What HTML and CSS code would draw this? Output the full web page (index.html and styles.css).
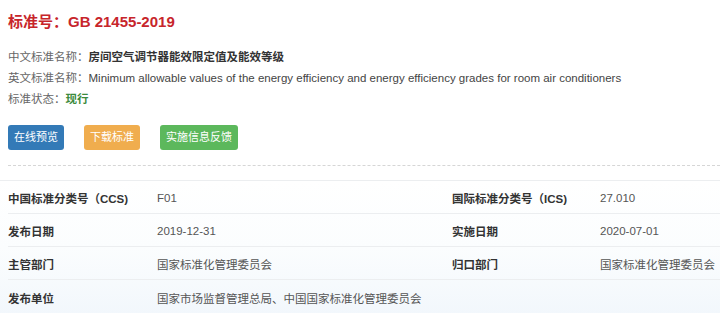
FILE: index.html
```html
<!DOCTYPE html>
<html>
<head>
<meta charset="utf-8">
<link rel="stylesheet" href="styles.css">
</head>
<body>
<div class="page">
  <h1 class="title">标准号：GB 21455-2019</h1>
  <div class="meta">
    <div class="meta-row"><span class="meta-label">中文标准名称：</span><span class="meta-value strong">房间空气调节器能效限定值及能效等级</span></div>
    <div class="meta-row"><span class="meta-label">英文标准名称：</span><span class="meta-value">Minimum allowable values of the energy efficiency and energy efficiency grades for room air conditioners</span></div>
    <div class="meta-row"><span class="meta-label">标准状态：</span><span class="meta-value status">现行</span></div>
  </div>
  <div class="actions">
    <span class="btn btn-blue">在线预览</span>
    <span class="btn btn-orange">下载标准</span>
    <span class="btn btn-green">实施信息反馈</span>
  </div>
  <div class="dotted"></div>
  <div class="table">
    <div class="row">
      <div class="cell label">中国标准分类号（CCS)</div>
      <div class="cell value">F01</div>
      <div class="cell label">国际标准分类号（ICS)</div>
      <div class="cell value">27.010</div>
    </div>
    <div class="row">
      <div class="cell label">发布日期</div>
      <div class="cell value">2019-12-31</div>
      <div class="cell label">实施日期</div>
      <div class="cell value">2020-07-01</div>
    </div>
    <div class="row">
      <div class="cell label">主管部门</div>
      <div class="cell value">国家标准化管理委员会</div>
      <div class="cell label">归口部门</div>
      <div class="cell value">国家标准化管理委员会</div>
    </div>
    <div class="row last">
      <div class="cell label">发布单位</div>
      <div class="cell value wide">国家市场监督管理总局、中国国家标准化管理委员会</div>
    </div>
  </div>
</div>
</body>
</html>
```
FILE: styles.css
```css
html, body {
  margin: 0;
  padding: 0;
  background: #fff;
}
body {
  font-family: "Liberation Sans", Arial, "Noto Sans CJK SC", sans-serif;
  font-size: 11.5px;
  color: #333;
}
.page {
  padding: 0 0 0 8px;
  overflow: hidden;
}
.title {
  margin: 0;
  padding-top: 11px;
  font-size: 15px;
  line-height: 22px;
  font-weight: bold;
  color: #c7252b;
}
.meta {
  margin-top: 14px;
}
.meta-row {
  line-height: 21px;
  white-space: nowrap;
}
.meta-label {
  color: #666;
}
.meta-value {
  color: #444;
}
.meta-value.strong {
  font-weight: bold;
  color: #333;
}
.meta-value.status {
  font-weight: bold;
  color: #3b8a3b;
}
.actions {
  display: flex;
  gap: 20px;
  margin-top: 15px;
}
.btn {
  display: inline-block;
  height: 25px;
  line-height: 25px;
  padding: 0 6px;
  border-radius: 3px;
  color: #fff;
  font-size: 11px;
}
.btn-blue { background: #337ab7; }
.btn-orange { background: #f0ad4e; }
.btn-green { background: #5cb85c; }
.dotted {
  margin-top: 15px;
  border-top: 1px dashed #d6d6d6;
}
.table {
  margin-top: 14px;
  border-top: 1px solid #eceef0;
  background: linear-gradient(to bottom, #ffffff 0%, #fbfdfe 50%, #f2f7fc 100%);
  margin-left: -8px;
  padding-left: 8px;
}
.row {
  display: grid;
  grid-template-columns: 149px 295px 148px 1fr;
  height: 31px;
  border-bottom: 1px solid #eceef0;
  align-items: center;
  padding-top: 1px;
}
.row.last {
  border-bottom: none;
  height: 34px;
}
.cell {
  white-space: nowrap;
}
.label {
  font-weight: bold;
  color: #333;
}
.value {
  color: #555;
}
.value.wide {
  grid-column: 2 / 5;
}
```
